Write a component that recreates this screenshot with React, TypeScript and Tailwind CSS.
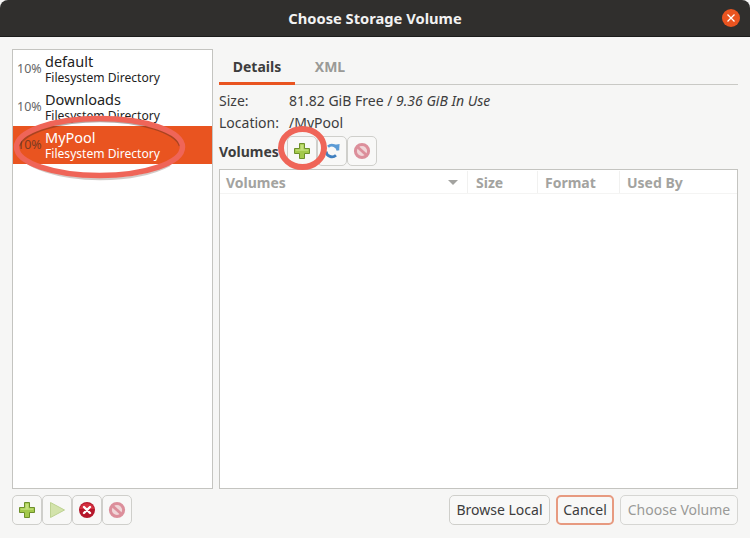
import React from "react";

const Plus = ({ s = 18, o = 1 }: { s?: number; o?: number }) => (
  <svg width={s} height={s} viewBox="0 0 18 18" style={{ opacity: o }}>
    <path d="M6.5 1.5h5v5h5v5h-5v5h-5v-5h-5v-5h5z" fill="#a3c94b" stroke="#6d8f2a" strokeWidth="1" strokeLinejoin="round" />
    <path d="M7.5 2.8h3v4.7h4.7v1.3H2.8V7.5h4.7z" fill="#c4df7c" />
  </svg>
);
const Play = () => (
  <svg width="18" height="18" viewBox="0 0 18 18">
    <path d="M2.5 1.5L16.5 9 2.5 16.5z" fill="#d3e3ab" stroke="#bdd291" strokeWidth="1" strokeLinejoin="round" />
  </svg>
);
const Stop = () => (
  <svg width="18" height="18" viewBox="0 0 18 18">
    <circle cx="9" cy="9" r="8" fill="#b5172b" />
    <path d="M1.6 8a7.5 7 0 0 1 14.8 0z" fill="#d4303f" />
    <path d="M6 6l6 6M12 6l-6 6" stroke="#fff" strokeWidth="2.4" strokeLinecap="round" />
  </svg>
);
const Del = () => (
  <svg width="18" height="18" viewBox="0 0 18 18">
    <circle cx="9" cy="9" r="6.6" fill="#f0d6d8" stroke="#dc8f9b" strokeWidth="3" />
    <path d="M4.6 5l8.8 8" stroke="#dc8f9b" strokeWidth="2.8" />
  </svg>
);
const Refresh = () => (
  <svg width="18" height="18" viewBox="0 0 18 18" fill="none">
    <path d="M15 8.5A6 6 0 0 0 5 4.8" stroke="#5b9bd5" strokeWidth="2.8" />
    <path d="M12 2.8l4.6-.8-.4 5.4z" fill="#5b9bd5" />
    <path d="M3 9.5a6 6 0 0 0 10 3.7" stroke="#3f7fbf" strokeWidth="2.8" />
  </svg>
);

const IconBtn = ({ children }: { children: React.ReactNode }) => (
  <div className="w-[30px] h-[30px] flex items-center justify-center rounded-[5px] border border-[#cfcfcb] bg-[#f8f8f7]">
    {children}
  </div>
);

const Row = ({ name, sel }: { name: string; sel?: boolean }) => (
  <div className={`h-[38px] flex items-center pl-[4px] ${sel ? "bg-[#e95420] text-white" : "text-[#222]"}`}>
    <span className={`text-[12.5px] w-[28px] shrink-0 ${sel ? "text-[#7c3a20]" : "text-[#666]"}`}>10%</span>
    <div className="flex flex-col">
      <span className="text-[14.5px] leading-[17px]">{name}</span>
      <span className="text-[12.1px] leading-[16px] whitespace-nowrap">Filesystem Directory</span>
    </div>
  </div>
);

const Btn = ({ children, cls = "" }: { children: React.ReactNode; cls?: string }) => (
  <div className={`h-[30px] flex items-center justify-center rounded-[5px] border text-[14px] pb-[1px] bg-[#f8f8f7] ${cls}`}>
    {children}
  </div>
);

export default function App() {
  return (
    <div
      className="relative w-[750px] h-[538px] flex flex-col overflow-hidden bg-[#f6f6f5] text-[#3d3d3d] text-[14px]"
      style={{ fontFamily: '"Noto Sans", sans-serif' }}
    >
      <div className="h-[37px] shrink-0 bg-[#302f2d] flex items-center justify-center relative rounded-t-[8px] border-b border-[#1c1c1b]">
        <span className="text-[#f2f2f2] text-[14.7px] font-bold">Choose Storage Volume</span>
        <div className="absolute right-[10px] top-[9px] w-[18px] h-[18px] rounded-full bg-[#e95420] flex items-center justify-center">
          <svg width="10" height="10" viewBox="0 0 10 10">
            <path d="M1.5 1.5l7 7M8.5 1.5l-7 7" stroke="#fff" strokeWidth="1.3" />
          </svg>
        </div>
      </div>

      <div className="flex-1 flex flex-col px-[12px] pt-[12px] pb-[13px]">
        <div className="flex gap-[6px] h-[440px]">
          <div className="w-[201px] shrink-0 border border-[#c4c4c0] bg-white overflow-hidden flex flex-col">
            <Row name="default" />
            <Row name="Downloads" />
            <Row name="MyPool" sel />
          </div>

          <div className="flex-1 flex flex-col min-w-0">
            <div className="flex h-[36px] border-b border-[#c9c9c5] shrink-0">
              <div className="w-[76px] flex items-center justify-center font-bold text-[#3d3d3d] border-b-[3px] border-[#e95420] h-[36px] pt-[2px]">
                Details
              </div>
              <div className="w-[70px] flex items-center justify-center font-bold text-[#9a9a97]">XML</div>
            </div>

            <div className="flex h-[30px] items-center">
              <span className="w-[70px]">Size:</span>
              <span>
                81.82 GiB Free / <i>9.36 GiB In Use</i>
              </span>
            </div>
            <div className="flex h-[14px] items-center">
              <span className="w-[70px]">Location:</span>
              <span>/MyPool</span>
            </div>

            <div className="flex items-center mt-[7px] h-[30px]">
              <span className="font-bold w-[68px]">Volumes</span>
              <IconBtn><Plus /></IconBtn>
              <IconBtn><Refresh /></IconBtn>
              <IconBtn><Del /></IconBtn>
            </div>

            <div className="mt-[3px] flex-1 border border-[#c4c4c0] bg-white flex flex-col">
              <div className="h-[24px] pt-[1px] flex items-center text-[#a3a3a0] font-bold border-b border-[#f4f4f3]">
                <div className="w-[248px] pl-[6px] flex items-center justify-between pr-[9px] border-r border-[#f1f1f0] h-full">
                  <span>Volumes</span>
                  <span className="w-0 h-0 border-l-[5px] border-r-[5px] border-t-[5px] border-l-transparent border-r-transparent border-t-[#a3a3a0]" />
                </div>
                <div className="w-[70px] pl-[8px] border-r border-[#f1f1f0] h-full flex items-center">Size</div>
                <div className="w-[82px] pl-[7px] border-r border-[#f1f1f0] h-full flex items-center">Format</div>
                <div className="pl-[7px]">Used By</div>
              </div>
            </div>
          </div>
        </div>

        <div className="flex items-center mt-[6px]">
          <div className="flex">
            <IconBtn><Plus /></IconBtn>
            <IconBtn><Play /></IconBtn>
            <IconBtn><Stop /></IconBtn>
            <IconBtn><Del /></IconBtn>
          </div>
          <div className="ml-auto flex gap-[6px]">
            <Btn cls="w-[101px] border-[#cfcfcb] text-[#3d3d3d]">Browse Local</Btn>
            <Btn cls="w-[58px] border-[#e79a80] border-[2px] text-[#3d3d3d]">Cancel</Btn>
            <Btn cls="w-[118px] border-[#d6d6d3] text-[#9a9a97]">Choose Volume</Btn>
          </div>
        </div>
      </div>

      <svg className="absolute left-0 top-0 pointer-events-none" width="750" height="538" fill="none">
        <path d="M19 146C24 132 60 121 100 121C140 121 176 132 180 146" stroke="#4a2a20" strokeOpacity="0.4" strokeWidth="2.5" />
        <path d="M16 151C24 168 60 179 100 179C130 179 155 173 170 165" stroke="#4a2a20" strokeOpacity="0.25" strokeWidth="2.5" />
        <ellipse cx="99.5" cy="147" rx="83" ry="28.5" stroke="#ef6558" strokeWidth="5.5" />
        <ellipse cx="302.5" cy="148" rx="21.5" ry="19" stroke="#ef6558" strokeWidth="6" />
      </svg>
    </div>
  );
}
